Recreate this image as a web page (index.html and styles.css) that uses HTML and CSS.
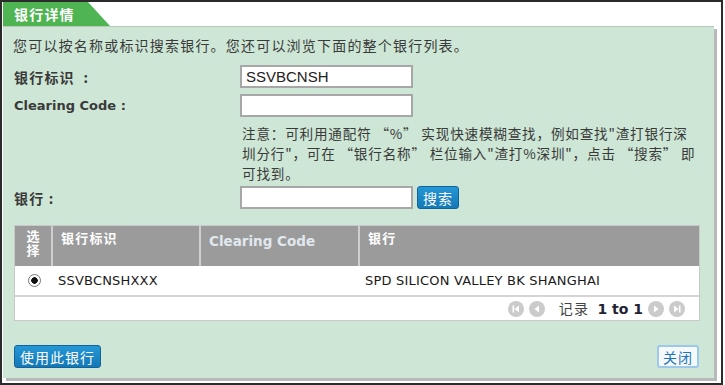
FILE: index.html
```html
<!DOCTYPE html>
<html>
	<head>
		<meta http-equiv="Content-Type" content="text/html; charset=utf-8">
		<title>银行详情</title>
		<link rel="stylesheet" href="styles.css">
	</head>
	<body>
		<div class="window">
			<div class="tab">银行详情</div>

			<div class="panel">
				<p class="intro">您可以按名称或标识搜索银行。您还可以浏览下面的整个银行列表。</p>

				<div class="form">
					<label class="label">银行标识&nbsp; :</label>
					<div class="field"><input class="text" type="text" value="SSVBCNSH"></div>

					<label class="label latin">Clearing Code :</label>
					<div class="field"><input class="text" type="text"></div>

					<span></span>
					<p class="note">注意：可利用通配符 “%” 实现快速模糊查找，例如查找"渣打银行深<br>圳分行"，可在 “银行名称” 栏位输入"渣打%深圳"，点击 “搜索” 即<br>可找到。</p>

					<label class="label">银行 :</label>
					<div class="field">
						<input class="text" type="text">
						<button class="btn btn-blue btn-search">搜索</button>
					</div>
				</div>

				<div class="grid">
					<div class="grid-head">
						<div class="col col-select">选择</div>
						<div class="col col-id">银行标识</div>
						<div class="col col-code latin">Clearing Code</div>
						<div class="col col-name">银行</div>
					</div>
					<div class="grid-row">
						<div class="col col-select"><span class="radio"></span></div>
						<div class="col col-id latin">SSVBCNSHXXX</div>
						<div class="col col-code"></div>
						<div class="col col-name latin">SPD SILICON VALLEY BK SHANGHAI</div>
					</div>
					<div class="pager">
						<svg class="nav" viewBox="0 0 16 16"><circle cx="8" cy="8" r="8"/><rect x="4.5" y="4.5" width="1.6" height="7"/><path d="M11 4.5v7L6.5 8z"/></svg>
						<svg class="nav" viewBox="0 0 16 16"><circle cx="8" cy="8" r="8"/><path d="M10 4.5v7L5.5 8z"/></svg>
						<span class="records">记录 <b class="latin">1 to 1</b></span>
						<svg class="nav" viewBox="0 0 16 16"><circle cx="8" cy="8" r="8"/><path d="M6 4.5v7L10.5 8z"/></svg>
						<svg class="nav" viewBox="0 0 16 16"><circle cx="8" cy="8" r="8"/><path d="M5 4.5v7L9.5 8z"/><rect x="9.9" y="4.5" width="1.6" height="7"/></svg>
					</div>
				</div>

				<div class="actions">
					<button class="btn btn-blue">使用此银行</button>
					<button class="btn btn-light">关闭</button>
				</div>
			</div>
		</div>
	</body>
</html>
```

FILE: styles.css
```css
* {
	margin: 0;
	padding: 0;
	box-sizing: border-box;
}

body {
	font: 14px/20px "Noto Sans CJK SC", sans-serif;
	letter-spacing: 1.2px;
	color: #3a3a3a;
	background: #fff;
}

.latin {
	font-family: "DejaVu Sans", "Noto Sans CJK SC", sans-serif;
	letter-spacing: 0;
}

.window {
	width: 723px;
	height: 385px;
	border: 2px solid #2b2b2b;
	padding: 0 0 0 1px;
	background: #fff;
	display: flex;
	flex-direction: column;
}

.tab {
	width: 107px;
	height: 24px;
	line-height: 24px;
	padding-left: 11px;
	color: #fff;
	font-weight: bold;
	font-size: 14px;
	background: #4fb452;
	clip-path: polygon(0 0, 85px 0, 107px 100%, 0 100%);
}

.panel {
	width: 711px;
	height: 352px;
	background: #cde6d5;
	border-top: 1px solid #b8c8bd;
	box-shadow: 3px 3px 0 #b9b9b9;
	padding: 8px 14px 0 11px;
}

.intro {
	margin-left: -1px;
}

.form {
	display: grid;
	grid-template-columns: 226px 1fr;
	row-gap: 6px;
	margin-top: 10px;
	align-items: center;
}

.label {
	font-weight: bold;
	font-size: 14px;
}

.label.latin {
	font-size: 13px;
}

.field {
	display: flex;
	align-items: center;
}

.text {
	width: 173px;
	height: 23px;
	border: 2px solid #a7a7a7;
	background: #fff;
	padding: 0 4px;
	font: 15px "Liberation Sans", sans-serif;
	color: #222;
	outline: none;
}

.note {
	padding-left: 2px;
	margin-bottom: -3px;
	font-size: 13.6px;
	letter-spacing: 0.8px;
	white-space: nowrap;
}

.btn {
	font: 14px/18px "Noto Sans CJK SC", sans-serif;
	letter-spacing: 1px;
	border-radius: 3px;
	cursor: pointer;
}

.btn-blue {
	color: #fff;
	background: linear-gradient(#2597d6, #1478b6);
	border: 1px solid #12639a;
	height: 23px;
	padding: 0 5px;
}

.btn-search {
	margin-left: 4px;
}

.btn-light {
	color: #1e74bb;
	background: #f5f9fc;
	border: 2px solid #9cc9ea;
	height: 23px;
	padding: 0 4px;
}

.grid {
	margin-top: 16px;
	border: 1px solid #c9c9c9;
	background: #fff;
}

.grid-head,
.grid-row {
	display: flex;
}

.grid-head {
	height: 40px;
	background: #9b9b9b;
	color: #fff;
	font-weight: bold;
	font-size: 13px;
	line-height: 14px;
}

.grid-head .col {
	padding: 5px 8px;
	border-right: 2px solid #cfcfcf;
}

.grid-head .col:last-child {
	border-right: none;
}

.grid-head .col-code {
	color: #e1e8ee;
	font-size: 13.5px;
	padding-top: 8px;
}

.grid-head .col-select {
	text-align: center;
	padding: 3px 9px;
	line-height: 14px;
	letter-spacing: 0;
}

.col-select {
	width: 38px;
}

.col-id {
	width: 148px;
}

.col-code {
	width: 159px;
}

.col-name {
	flex: 1;
}

.grid-row {
	height: 31px;
	align-items: center;
	border-bottom: 2px solid #d4d4d4;
	font-size: 13px;
	color: #1a1a1a;
}

.grid-row .latin {
	letter-spacing: 0.2px;
}

.grid-row .col-id,
.grid-row .col-name {
	padding-left: 5px;
}

.grid-row .col-select {
	display: flex;
	justify-content: center;
	padding-left: 1px;
}

.radio {
	width: 13px;
	height: 13px;
	border-radius: 50%;
	border: 1px solid #777;
	background: radial-gradient(circle, #111 0 3px, #fff 3.5px);
}

.pager {
	height: 23px;
	display: flex;
	align-items: center;
	justify-content: flex-end;
	gap: 5px;
	padding-right: 14px;
	font-size: 14px;
	color: #444;
}

.nav {
	width: 16px;
	height: 16px;
	fill: #fff;
}

.nav circle {
	fill: #cbcbcb;
}

.records {
	margin: 0 0 0 9px;
}

.records b {
	font-size: 14px;
	color: #223;
	margin-left: 4px;
}

.actions {
	margin-top: 24px;
	display: flex;
	justify-content: space-between;
	padding-right: 1px;
}
```
